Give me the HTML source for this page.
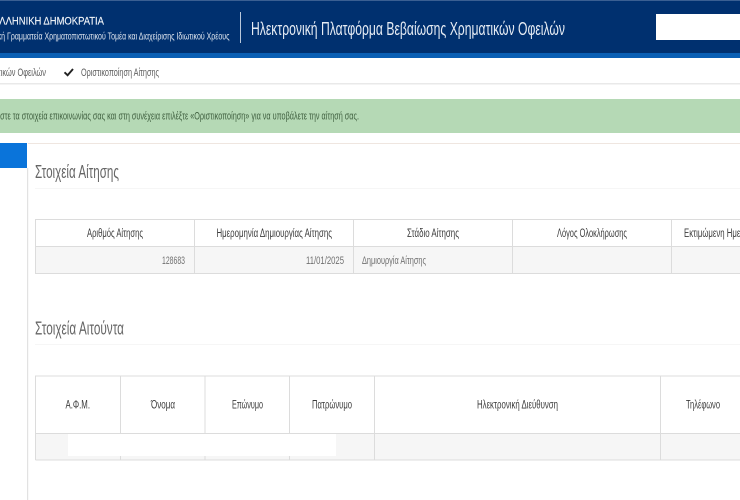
<!DOCTYPE html>
<html lang="el">
<head>
<meta charset="utf-8">
<title>Ηλεκτρονική Πλατφόρμα Βεβαίωσης Χρηματικών Οφειλών</title>
<style>
html,body{margin:0;padding:0;width:740px;height:500px;overflow:hidden;background:#fff}
svg{display:block;filter:blur(.35px)}
text{font-family:"Liberation Sans",sans-serif}
.h{font-size:11.5px;fill:#3c3c3c}
.c{font-size:11px;fill:#707070}
.t{font-size:18px;fill:#666}
</style>
</head>
<body>
<svg xmlns="http://www.w3.org/2000/svg" width="740" height="500" viewBox="0 0 740 500">
<rect width="740" height="500" fill="#fff"/>
<!-- header -->
<rect width="740" height="54" fill="#00306f"/>
<rect width="740" height="1" fill="#3a5f92"/>
<rect y="53" width="740" height="5" fill="#0a5fb4"/>
<rect x="656" y="14" width="84" height="26" fill="#fff"/>
<rect x="240" y="12" width="1" height="31" fill="#b9c7da"/>
<text x="-7" y="24.5" font-size="11" fill="#f2f5f9" stroke="#f2f5f9" stroke-width=".15" textLength="111" lengthAdjust="spacingAndGlyphs">ΕΛΛΗΝΙΚΗ ΔΗΜΟΚΡΑΤΙΑ</text>
<text x="-14" y="39.5" font-size="10.5" fill="#dfe6ef" textLength="243.5" lengthAdjust="spacingAndGlyphs">Ειδική Γραμματεία Χρηματοπιστωτικού Τομέα και Διαχείρισης Ιδιωτικού Χρέους</text>
<text x="251" y="35" font-size="18" fill="#e6ecf4" textLength="314" lengthAdjust="spacingAndGlyphs">Ηλεκτρονική Πλατφόρμα Βεβαίωσης Χρηματικών Οφειλών</text>
<!-- breadcrumb -->
<text x="-24" y="76" font-size="11" fill="#5c5c5c" textLength="70" lengthAdjust="spacingAndGlyphs">Χρηματικών Οφειλών</text>
<path d="M64.5 72.3 L67.6 75.2 L73 69" fill="none" stroke="#222" stroke-width="1.9"/>
<text x="81" y="76" font-size="11" fill="#5c5c5c" textLength="78" lengthAdjust="spacingAndGlyphs">Οριστικοποίηση Αίτησης</text>
<rect y="83" width="740" height="1.5" fill="#e9e9e9"/>
<!-- alert -->
<rect y="99" width="740" height="34" fill="#b5d9b5"/>
<text x="-35" y="119.5" font-size="11" fill="#3f5f3f" textLength="394" lengthAdjust="spacingAndGlyphs">Συμπληρώστε τα στοιχεία επικοινωνίας σας και στη συνέχεια επιλέξτε «Οριστικοποίηση» για να υποβάλετε την αίτησή σας.</text>
<!-- side -->
<rect x="28" y="143" width="712" height="1" fill="#efe6e0"/>
<rect y="143" width="27" height="25" fill="#0a74da"/>
<rect x="27" y="168" width="1.2" height="332" fill="#e2e2e2"/>
<!-- section 1 -->
<text class="t" x="35" y="178" textLength="84" lengthAdjust="spacingAndGlyphs">Στοιχεία Αίτησης</text>
<rect x="35" y="188" width="705" height="1" fill="#f6f6f6"/>
<rect x="35.5" y="246.5" width="705" height="27" fill="#f6f6f6"/>
<path d="M35.5 274 V219.5 H740 M35.5 246.5 H740 M35.5 273.5 H740 M194.5 219.5 V274 M353.5 219.5 V274 M512.5 219.5 V274 M671.5 219.5 V274" fill="none" stroke="#dcdcdc" stroke-width="1"/>
<text class="h" x="87" y="237" textLength="56" lengthAdjust="spacingAndGlyphs">Αριθμός Αίτησης</text>
<text class="h" x="216.5" y="237" textLength="115.5" lengthAdjust="spacingAndGlyphs">Ημερομηνία Δημιουργίας Αίτησης</text>
<text class="h" x="407" y="237" textLength="52" lengthAdjust="spacingAndGlyphs">Στάδιο Αίτησης</text>
<text class="h" x="557" y="237" textLength="70" lengthAdjust="spacingAndGlyphs">Λόγος Ολοκλήρωσης</text>
<text class="h" x="684" y="237" textLength="84" lengthAdjust="spacingAndGlyphs">Εκτιμώμενη Ημερομηνία</text>
<text class="c" x="162" y="264" textLength="23" lengthAdjust="spacingAndGlyphs">128683</text>
<text class="c" x="306" y="264" textLength="38" lengthAdjust="spacingAndGlyphs">11/01/2025</text>
<text class="c" x="362" y="264" textLength="64" lengthAdjust="spacingAndGlyphs">Δημιουργία Αίτησης</text>
<!-- section 2 -->
<text class="t" x="35" y="334.5" textLength="89" lengthAdjust="spacingAndGlyphs">Στοιχεία Αιτούντα</text>
<rect x="35" y="344" width="705" height="1" fill="#f6f6f6"/>
<rect x="35.5" y="433.5" width="705" height="27" fill="#f6f6f6"/>
<path d="M35.5 460 V376 H740 M35.5 433.5 H740 M35.5 460 H740 M120.5 376 V460 M205 376 V460 M289.5 376 V460 M374.5 376 V460 M660.5 376 V460" fill="none" stroke="#dcdcdc" stroke-width="1"/>
<rect x="68" y="434" width="268" height="22" fill="#fff"/>
<text class="h" x="65.5" y="408.5" textLength="24.5" lengthAdjust="spacingAndGlyphs">Α.Φ.Μ.</text>
<text class="h" x="151" y="408.5" textLength="24" lengthAdjust="spacingAndGlyphs">Όνομα</text>
<text class="h" x="232" y="408.5" textLength="31" lengthAdjust="spacingAndGlyphs">Επώνυμο</text>
<text class="h" x="312" y="408.5" textLength="40" lengthAdjust="spacingAndGlyphs">Πατρώνυμο</text>
<text class="h" x="477" y="408.5" textLength="81" lengthAdjust="spacingAndGlyphs">Ηλεκτρονική Διεύθυνση</text>
<text class="h" x="686" y="408.5" textLength="34" lengthAdjust="spacingAndGlyphs">Τηλέφωνο</text>
</svg>
</body>
</html>
